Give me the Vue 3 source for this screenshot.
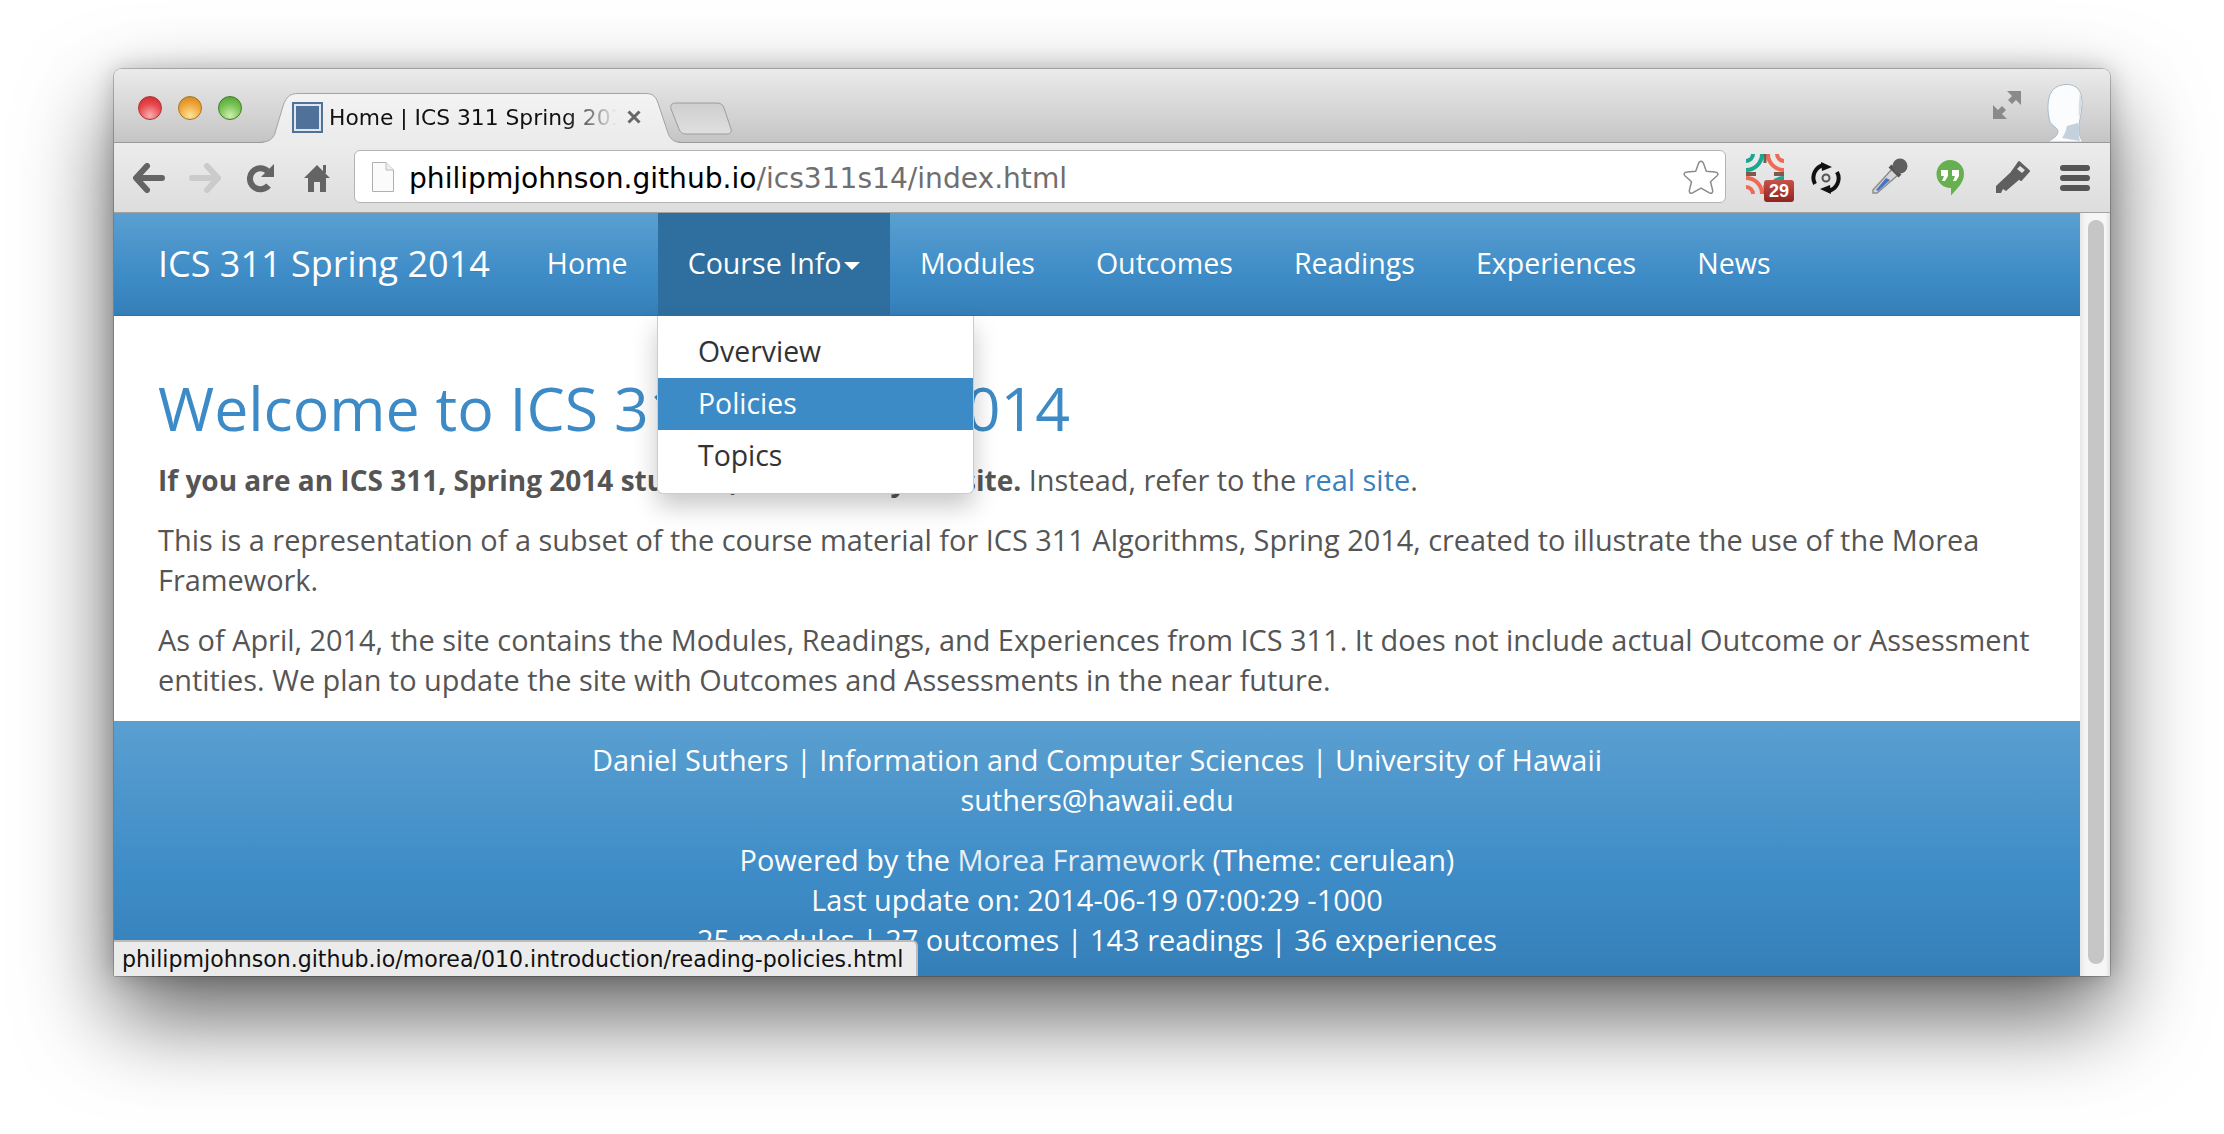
<script setup>
const navItems = ['Home', 'Course Info', 'Modules', 'Outcomes', 'Readings', 'Experiences', 'News']
const menuItems = ['Overview', 'Policies', 'Topics']
</script>

<template>
  <div class="window">
    <!-- title bar -->
    <div class="titlebar">
      <span class="light red"></span>
      <span class="light amber"></span>
      <span class="light green"></span>

      <div class="tab">
        <svg class="tab-shape" width="419" height="50" viewBox="0 0 419 50">
          <defs>
            <linearGradient id="tabFill" x1="0" y1="0" x2="0" y2="1">
              <stop offset="0" stop-color="#f3f3f3" />
              <stop offset="1" stop-color="#ebebeb" />
            </linearGradient>
          </defs>
          <path d="M0 50C8 49 12 46 14 40L22 13C25 4 29 .5 37 .5H385C392 .5 395 4 397 10L407 40C409 46 413 49 419 50Z" fill="url(#tabFill)" />
          <path d="M0 49C8 49 12 46 14 40L22 13C25 4 29 .5 37 .5H385C392 .5 395 4 397 10L407 40C409 46 413 49 419 49" fill="none" stroke="#a4a4a4" stroke-width="1" />
        </svg>
        <span class="favicon"></span>
        <span class="tab-title">Home | ICS 311 Spring 2014</span>
        <svg class="tab-close" width="16" height="16" viewBox="0 0 16 16">
          <path d="M2.5 2.5l11 11M13.5 2.5l-11 11" stroke="#666" stroke-width="3" />
        </svg>
      </div>

      <svg class="new-tab" width="66" height="33" viewBox="0 0 66 33">
        <defs>
          <linearGradient id="newTabFill" x1="0" y1="0" x2="0" y2="1">
            <stop offset="0" stop-color="#cfcfcf" />
            <stop offset="1" stop-color="#dfdfdf" />
          </linearGradient>
        </defs>
        <path d="M9 1H50C54 1 56 3 57 6L64 27C65 30 63 32 60 32H19C15 32 13 30 12 27L4 7C3 3 5 1 9 1Z" fill="url(#newTabFill)" stroke="#9c9c9c" />
      </svg>

      <svg class="expand" width="28" height="28" viewBox="0 0 28 28">
        <path d="M14 0H28V14L23 9L19 13L15 9L19 5Z" fill="#8a8a8a" />
        <path d="M0 14V28H14L9 23L13 19L9 15L5 19Z" fill="#8a8a8a" />
      </svg>

      <svg class="avatar" width="36" height="58" viewBox="0 0 36 58">
        <path d="M2 14C4 4 12 .5 20 .5C30 .5 35 7 35 18C35 28 33 33 32 41C31 47 33 54 36 58H0C6 55 11 52 11 47C10 43 5 42 3 38C1 30 0 22 2 14Z" fill="#fbfcfd" stroke="#a9bccd" stroke-width="1" />
        <path d="M20 42L31 39C31 47 32 52 33 57L15 54C18 50 19 46 20 42Z" fill="#c4d0dc" />
        <path d="M33 8C35 16 35 24 32 34C31 26 32 16 33 8Z" fill="#d5dfe8" />
      </svg>
    </div>

    <!-- toolbar -->
    <div class="toolbar">
      <button class="tool">
        <svg width="32" height="30" viewBox="0 0 32 30">
          <path d="M14 3L3 15L14 27M4 15H29" fill="none" stroke="#646464" stroke-width="6" stroke-linecap="round" stroke-linejoin="round" />
        </svg>
      </button>
      <button class="tool">
        <svg width="32" height="30" viewBox="0 0 32 30">
          <path d="M18 3L29 15L18 27M28 15H3" fill="none" stroke="#cbcbcb" stroke-width="6" stroke-linecap="round" stroke-linejoin="round" />
        </svg>
      </button>
      <button class="tool">
        <svg width="28" height="30" viewBox="0 0 28 30">
          <path d="M21.500 22.500A10.500 10.500 0 1 1 20.500 8" fill="none" stroke="#646464" stroke-width="6" />
          <path d="M27 1V14H14Z" fill="#646464" />
        </svg>
      </button>
      <button class="tool">
        <svg width="26" height="28" viewBox="0 0 26 28">
          <path d="M13 1L26 14H22V28H16V18H10V28H4V14H0Z" fill="#646464" />
          <rect x="19" y="1" width="3" height="8" fill="#646464" />
        </svg>
      </button>

      <div class="omnibox">
        <svg class="page-icon" width="24" height="32" viewBox="0 0 24 32">
          <path d="M1.500 1.500H15L22.500 9V30.500H1.500Z" fill="#fbfbfb" stroke="#b0b0b0" />
          <path d="M15 1.500V9H22.500" fill="#eee" stroke="#bcbcbc" />
        </svg>
        <span class="url"><span class="host">philipmjohnson.github.io</span>/ics311s14/index.html</span>
        <svg class="star" width="38" height="38" viewBox="0 0 36 36">
          <path d="M18 3C19 3 20 4 20.500 5.500L23 12.500L31 13.200C34 13.500 35 15 33 17L27 22.500L29 30.500C29.500 33 28 34 26 33L18 28.500L10 33C8 34 6.500 33 7 30.500L9 22.500L3 17C1 15 2 13.500 5 13.200L13 12.500L15.500 5.500C16 4 17 3 18 3Z" fill="#fff" stroke="#8a8a8a" stroke-width="1.400" stroke-linejoin="round" />
        </svg>
      </div>

      <div class="ext ext-calendar">
        <svg width="38" height="40" viewBox="0 0 38 40">
          <defs>
            <clipPath id="calClip"><rect x="0" y="0" width="38" height="40" /></clipPath>
          </defs>
          <g clip-path="url(#calClip)" fill="none" stroke-width="4">
            <path d="M7 0A7 7 0 0 1 0 7M16 0A16 16 0 0 1 0 16" stroke="#17a88f" />
            <path d="M31 0A7 7 0 0 0 38 7M22 0A16 16 0 0 0 38 16" stroke="#ee6a55" />
            <path d="M7 40A7 7 0 0 0 0 33M16 40A16 16 0 0 0 0 24" stroke="#ee6a55" />
            <path d="M31 40A7 7 0 0 1 38 33M22 40A16 16 0 0 1 38 24" stroke="#17a88f" />
            <path d="M19 0V9M19 31V40" stroke="#7d5a4d" stroke-width="3" />
            <path d="M0 20H10M28 20H38" stroke="#7d5a4d" stroke-width="4" />
          </g>
        </svg>
        <span class="badge">29</span>
      </div>

      <svg class="ext-sync" width="32" height="32" viewBox="0 0 32 32">
        <path d="M5 22A13 13 0 0 1 14 3M27 10A13 13 0 0 1 18 29" fill="none" stroke="#111" stroke-width="4" />
        <path d="M11 0L22 5L12 9ZM21 32L10 27L20 23Z" fill="#111" />
        <circle cx="16" cy="16" r="3.500" fill="none" stroke="#555" stroke-width="2" />
      </svg>

      <svg class="ext-dropper" width="36" height="36" viewBox="0 0 36 36">
        <path d="M1 32L20 11L26 17L5 35L1 35Z" fill="#d6d6d6" stroke="#8d8d8d" stroke-width="1.500" />
        <path d="M4 32L14 20L18 22L6 33Z" fill="#4674c4" />
        <path d="M18 8L28 18" stroke="#555" stroke-width="4" />
        <circle cx="28" cy="8" r="7.500" fill="#5f5f5f" />
      </svg>

      <svg class="ext-hangouts" width="28" height="36" viewBox="0 0 28 36">
        <path d="M14 0A14 14 0 0 1 28 14C28 22 22 28 15 35.500V28A14 14 0 0 1 14 0Z" fill="#66b050" />
        <path d="M5 10H12V16L9 21H6L8 16H5ZM16 10H23V16L20 21H17L19 16H16Z" fill="#fff" />
      </svg>

      <svg class="ext-key" width="35" height="34" viewBox="0 0 35 34">
        <path d="M1 26L17 11L25 19L11 31L8 29L6 33L1 33Z" fill="#5f5f5f" />
        <path d="M17 12L24 2L34 11L26 20Z" fill="#5f5f5f" stroke="#5f5f5f" stroke-width="2" stroke-linejoin="round" />
        <path d="M22 9L25 6L30 10L27 13Z" fill="#e4e4e4" />
      </svg>

      <div class="menu-btn"><span></span><span></span><span></span></div>
    </div>

    <!-- page -->
    <div class="viewport">
      <div class="page">
        <nav class="navbar">
          <span class="brand">ICS 311 Spring 2014</span>
          <a v-for="item in navItems" :key="item" class="nav-link" :class="{ open: item === 'Course Info' }">
            {{ item }}<span v-if="item === 'Course Info'" class="caret"></span>
          </a>
        </nav>

        <ul class="dropdown">
          <li v-for="item in menuItems" :key="item" :class="{ active: item === 'Policies' }">{{ item }}</li>
        </ul>

        <main class="content">
          <h1>Welcome to ICS 311 Spring 2014</h1>
          <p><strong>If you are an ICS 311, Spring 2014 student, this is not your site.</strong> Instead, refer to the <a class="link">real site</a>.</p>
          <p>This is a representation of a subset of the course material for ICS 311 Algorithms, Spring 2014, created to illustrate the use of the Morea Framework.</p>
          <p>As of April, 2014, the site contains the Modules, Readings, and Experiences from ICS 311. It does not include actual Outcome or Assessment entities. We plan to update the site with Outcomes and Assessments in the near future.</p>
        </main>

        <footer class="footer">
          <p>Daniel Suthers | Information and Computer Sciences | University of Hawaii<br>suthers@hawaii.edu</p>
          <p>Powered by the <a class="foot-link">Morea Framework</a> (Theme: cerulean)<br>Last update on: 2014-06-19 07:00:29 -1000<br>25 modules | 27 outcomes | 143 readings | 36 experiences</p>
        </footer>
      </div>

      <div class="scrollbar"><div class="thumb"></div></div>

      <div class="status">philipmjohnson.github.io/morea/010.introduction/reading-policies.html</div>
    </div>
  </div>
</template>

<style scoped>
.window {
  position: relative;
  width: 1996px;
  height: 907px;
  margin: 69px 0 0 114px;
  border-radius: 8px 8px 2px 2px;
  box-shadow: 0 40px 90px rgba(0,0,0,0.62), 0 0 24px rgba(0,0,0,0.22), 0 0 0 1px rgba(0,0,0,0.2);
  display: flex;
  flex-direction: column;
}

.titlebar {
  height: 74px;
  flex: none;
  display: flex;
  align-items: flex-start;
  padding-left: 24px;
  background: linear-gradient(#ebebeb, #c5c5c5);
  border-bottom: 1px solid #9a9a9a;
  border-radius: 8px 8px 0 0;
  box-sizing: border-box;
}

.light {
  width: 24px;
  height: 24px;
  margin: 27px 16px 0 0;
  border-radius: 50%;
  flex: none;
  box-sizing: border-box;
}
.red { background: radial-gradient(circle at 50% 85%, #f6b0b0, #e8474c 55%, #c9272c); border: 1px solid #a33; }
.amber { background: radial-gradient(circle at 50% 85%, #fbe59a, #f0a43a 55%, #c9831c); border: 1px solid #a9741c; }
.green { background: radial-gradient(circle at 50% 85%, #cfeeb0, #75c150 55%, #4f9b32); border: 1px solid #3c7d24; }

.tab {
  position: relative;
  width: 419px;
  height: 50px;
  margin: 24px 0 0 3px;
  flex: none;
  z-index: 2;
  display: flex;
  align-items: center;
}
.tab-shape { position: absolute; left: 0; top: 0; }
.favicon {
  position: relative;
  width: 31px;
  height: 31px;
  margin: -2px 0 0 31px;
  box-sizing: border-box;
  flex: none;
  background: #50729a;
  border: 2px solid #50729a;
  box-shadow: inset 0 0 0 2px #dfe6ee;
}
.tab-title {
  position: relative;
  width: 297px;
  margin: -2px 0 0 6px;
  overflow: hidden;
  white-space: nowrap;
  font: 21.8px "DejaVu Sans", sans-serif;
  color: #111;
  -webkit-mask-image: linear-gradient(90deg, #000 80%, transparent 97%);
  mask-image: linear-gradient(90deg, #000 80%, transparent 97%);
}
.tab-close { position: relative; margin: -2px 0 0 0; flex: none; }

.new-tab { flex: none; margin: 33px 0 0 -13px; }
.expand { flex: none; margin: 22px 0 0 1260px; }
.avatar { flex: none; margin: 15px 0 0 26px; }

.toolbar {
  height: 70px;
  flex: none;
  display: flex;
  align-items: center;
  padding-left: 7px;
  background: linear-gradient(#ececec, #dddddd);
  border-bottom: 1px solid #a3a3a3;
  box-sizing: border-box;
}
.tool {
  width: 56px;
  height: 40px;
  padding: 0;
  border: 0;
  background: none;
  display: flex;
  align-items: center;
  justify-content: center;
  flex: none;
}

.omnibox {
  width: 1372px;
  height: 53px;
  margin-left: 9px;
  flex: none;
  display: flex;
  align-items: center;
  padding: 0 5px 0 16px;
  box-sizing: border-box;
  background: #fff;
  border: 1px solid #b4b4b4;
  border-radius: 6px;
  margin-top: -2px;
}
.url {
  margin-left: 14px;
  padding-top: 3px;
  font: 28.1px "DejaVu Sans", sans-serif;
  color: #6f6f6f;
  white-space: nowrap;
}
.host { color: #000; }
.star { margin-left: auto; }

.ext { position: relative; flex: none; }
.ext-calendar { width: 48px; height: 48px; margin: 0 0 0 20px; }
.ext-calendar svg { position: absolute; left: 0; top: 0; }
.badge {
  position: absolute;
  right: 0;
  bottom: 0;
  width: 30px;
  height: 22px;
  border-radius: 3px;
  background: linear-gradient(#c9514a, #8c2620);
  color: #fff;
  font: bold 18px/22px "Liberation Sans", sans-serif;
  text-align: center;
}
.ext-sync { flex: none; margin-left: 16px; }
.ext-dropper { flex: none; margin: -4px 0 0 30px; }
.ext-hangouts { flex: none; margin: 0 0 0 28px; }
.ext-key { flex: none; margin: -2px 0 0 31px; }
.menu-btn {
  width: 30px;
  margin-left: 30px;
  display: flex;
  flex-direction: column;
  gap: 4px;
  flex: none;
}
.menu-btn span { height: 6px; border-radius: 3px; background: #555; }

.viewport {
  position: relative;
  flex: 1;
  display: flex;
  overflow: hidden;
  min-height: 0;
}
.page {
  position: relative;
  width: 1966px;
  flex: none;
  height: 763px;
  overflow: hidden;
  background: #fff;
  font-family: "Open Sans", sans-serif;
  font-size: 28.9px;
  line-height: 40px;
  color: #555;
}

.navbar {
  height: 102px;
  display: flex;
  align-items: stretch;
  padding-left: 44px;
  background: linear-gradient(#5a9fd0, #3e8cc7 60%, #357fb8);
  border-bottom: 1px solid #2f72a5;
  color: #fff;
  text-shadow: 0 1px 0 rgba(0,0,0,0.08);
}
.brand {
  font-size: 36px;
  line-height: 102px;
  margin-right: 27px;
  white-space: nowrap;
}
.nav-link {
  padding: 0 30px;
  font-size: 28.6px;
  line-height: 100px;
  white-space: nowrap;
}
.nav-link:nth-of-type(n+3) { padding: 0 30.5px; }
.nav-link.open { background: #2e6f9f; padding-right: 30px; }
.caret {
  display: inline-block;
  margin-left: 2px;
  vertical-align: middle;
  border-top: 8px solid #fff;
  border-left: 8px solid transparent;
  border-right: 8px solid transparent;
}

.dropdown {
  position: absolute;
  left: 543px;
  top: 103px;
  width: 317px;
  margin: 0;
  padding: 10px 0;
  list-style: none;
  box-sizing: border-box;
  height: 178px;
  background: #fff;
  border: 1px solid #ccc;
  border-top: 0;
  border-radius: 0 0 6px 6px;
  box-shadow: 0 12px 24px rgba(0,0,0,0.22);
  z-index: 3;
  color: #333;
  font-size: 28.4px;
}
.dropdown li { height: 52px; line-height: 50px; padding-left: 40px; }
.dropdown li.active { background: #3d8bc6; color: #fff; }

.content { padding: 59px 44px 1px; }
h1 {
  margin: 0 0 19px;
  font-size: 60.8px;
  font-weight: 400;
  line-height: 66px;
  color: #3d8bc6;
}
p { margin: 0 0 20px; }
strong { font-size: 28px; }
.link { color: #3a80bb; }

.footer {
  padding-top: 19px;
  height: 256px;
  box-sizing: border-box;
  text-align: center;
  color: #fff;
  background: linear-gradient(#5a9fd0, #3e8cc7 60%, #357fb8);
}
.foot-link { color: #e6eef5; }

.scrollbar {
  position: relative;
  flex: none;
  width: 30px;
  background: linear-gradient(90deg, #e6e6e6, #f6f6f6 20%, #f6f6f6 85%, #e2e2e2);
}
.thumb {
  width: 16px;
  height: 744px;
  margin: 7px 0 0 8px;
  border-radius: 8px;
  background: #c6c6c6;
}

.status {
  position: absolute;
  left: 0;
  bottom: 0;
  height: 36px;
  width: 804px;
  box-sizing: border-box;
  padding-left: 8px;
  background: #ebebeb;
  border: 2px solid #bbb;
  border-left: 0;
  border-bottom: 0;
  border-radius: 0 6px 0 0;
  font: 22.1px/34px "DejaVu Sans", sans-serif;
  color: #111;
  white-space: nowrap;
}
</style>

<style>
html, body, #app { height: 100%; background: #fff; overflow: hidden; }
#app { padding-top: 0.02px; box-sizing: border-box; }
</style>
